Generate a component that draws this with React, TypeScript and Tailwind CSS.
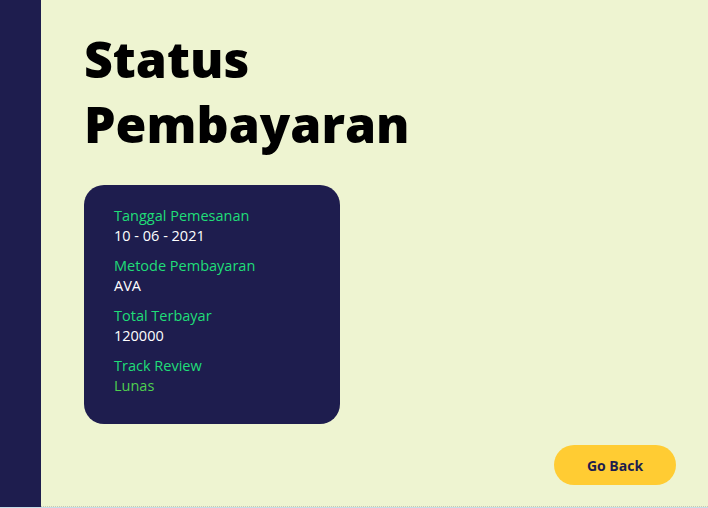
const details = [
  { label: 'Tanggal Pemesanan', value: '10 - 06 - 2021' },
  { label: 'Metode Pembayaran', value: 'AVA' },
  { label: 'Total Terbayar', value: '120000' },
  { label: 'Track Review', value: 'Lunas', status: true },
];

export default function App() {
  return (
    <div className="h-[508px] w-[708px] bg-[#c5dbe6] font-['Open_Sans',sans-serif]">
      <div className="flex h-[507px]">
        <aside className="w-[41px] shrink-0 bg-[#1e1d4e]" />
        <main className="flex flex-1 flex-col border-b border-dotted border-[#c8c8b4] bg-[#eef4d1] pl-[43px] pr-[32px]">
          <h1 className="mt-[27px] text-[50px] font-extrabold leading-[65px] text-black">
            Status
            <br />
            Pembayaran
          </h1>
          <div className="mt-[28px] w-[256px] rounded-[20px] bg-[#1e1d4e] pb-[28px] pl-[30px] pt-[21px]">
            {details.map((d) => (
              <div key={d.label} className="mb-[10px] text-[14.5px] leading-[20px] last:mb-0">
                <p className="text-[#20dd78]">{d.label}</p>
                <p className={d.status ? 'text-[#4fcf4f]' : 'text-white'}>{d.value}</p>
              </div>
            ))}
          </div>
          <div className="mt-[21px] flex justify-end">
            <button className="h-[40px] w-[122px] rounded-full bg-[#ffcc33] text-[14px] font-bold text-[#1e1d4e]">
              Go Back
            </button>
          </div>
        </main>
      </div>
    </div>
  );
}
